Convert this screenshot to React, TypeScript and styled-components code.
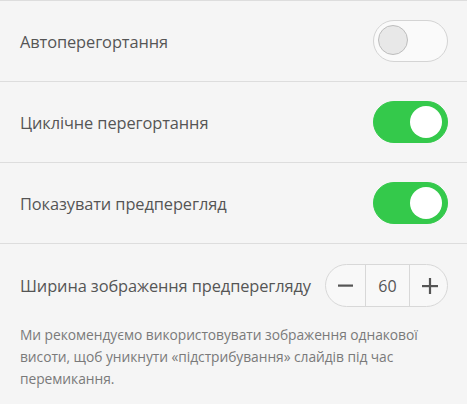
import React, { useState } from "react";
import styled, { createGlobalStyle } from "styled-components";

const Global = createGlobalStyle`
  html, body { margin: 0; padding: 0; background: #f5f5f5; }
  body { font-family: "Open Sans", "Noto Sans", sans-serif; }
`;

const Panel = styled.div`
  width: 467px;
  background: #f5f5f5;
  border-top: 1px solid #dddddd;
`;

const Row = styled.div`
  display: flex;
  align-items: center;
  justify-content: space-between;
  height: 80px;
  padding: 0 19px 0 20px;
  border-bottom: 1px solid #dddddd;
`;

const StepRow = styled.div`
  display: flex;
  align-items: center;
  justify-content: space-between;
  padding: 20px 19px 0 20px;
  height: 43px;
`;

const Label = styled.span`
  font-size: 16.4px;
  letter-spacing: -0.1px;
  color: #555555;
`;

const Switch = styled.button<{ $on: boolean }>`
  position: relative;
  width: 75px;
  height: 42px;
  border-radius: 21px;
  padding: 0;
  cursor: pointer;
  border: 1px solid ${(p) => (p.$on ? "#34c94b" : "#d4d4d4")};
  background: ${(p) => (p.$on ? "#34c94b" : "#fafafa")};
  &::after {
    content: "";
    position: absolute;
    top: 4px;
    left: ${(p) => (p.$on ? "36px" : "4px")};
    width: ${(p) => (p.$on ? "32px" : "30px")};
    height: ${(p) => (p.$on ? "32px" : "30px")};
    border-radius: 50%;
    box-sizing: border-box;
    background: ${(p) => (p.$on ? "#ffffff" : "#e8e8e8")};
    border: ${(p) => (p.$on ? "none" : "1px solid #bdbdbd")};
  }
`;

const Stepper = styled.div`
  display: flex;
  height: 43px;
  width: 123px;
  box-sizing: border-box;
  border: 1px solid #d8d8d8;
  border-radius: 22px;
  background: #f8f8f8;
  overflow: hidden;
`;

const StepBtn = styled.button`
  flex: 0 0 39px;
  display: flex;
  align-items: center;
  justify-content: center;
  border: none;
  background: transparent;
  padding: 0;
  color: #555555;
  cursor: pointer;
`;

const StepValue = styled.div`
  flex: 0 0 43px;
  display: flex;
  align-items: center;
  justify-content: center;
  border-left: 1px solid #d8d8d8;
  border-right: 1px solid #d8d8d8;
  font-size: 16px;
  color: #555555;
`;

const Note = styled.p`
  margin: 0;
  padding: 17px 20px 0 20px;
  font-size: 13.8px;
  letter-spacing: -0.05px;
  line-height: 22px;
  color: #7a7a7a;
`;

function MinusIcon() {
  return (
    <svg width="15" height="15" viewBox="0 0 15 15">
      <rect x="0" y="6.5" width="15" height="2.2" fill="#555" />
    </svg>
  );
}

function PlusIcon() {
  return (
    <svg width="16" height="16" viewBox="0 0 16 16">
      <rect x="0" y="7" width="16" height="2.2" fill="#555" />
      <rect x="6.9" y="0" width="2.2" height="16" fill="#555" />
    </svg>
  );
}

export default function App() {
  const [auto, setAuto] = useState(false);
  const [loop, setLoop] = useState(true);
  const [preview, setPreview] = useState(true);
  const [width, setWidth] = useState(60);
  return (
    <Panel>
      <Global />
      <Row>
        <Label>Автоперегортання</Label>
        <Switch $on={auto} onClick={() => setAuto(!auto)} />
      </Row>
      <Row>
        <Label>Циклічне перегортання</Label>
        <Switch $on={loop} onClick={() => setLoop(!loop)} />
      </Row>
      <Row>
        <Label>Показувати предперегляд</Label>
        <Switch $on={preview} onClick={() => setPreview(!preview)} />
      </Row>
      <StepRow>
        <Label>Ширина зображення предперегляду</Label>
        <Stepper>
          <StepBtn onClick={() => setWidth(width - 1)}>
            <MinusIcon />
          </StepBtn>
          <StepValue>{width}</StepValue>
          <StepBtn onClick={() => setWidth(width + 1)}>
            <PlusIcon />
          </StepBtn>
        </Stepper>
      </StepRow>
      <Note>
        Ми рекомендуємо використовувати зображення однакової висоти, щоб
        уникнути «підстрибування» слайдів під час перемикання.
      </Note>
    </Panel>
  );
}
